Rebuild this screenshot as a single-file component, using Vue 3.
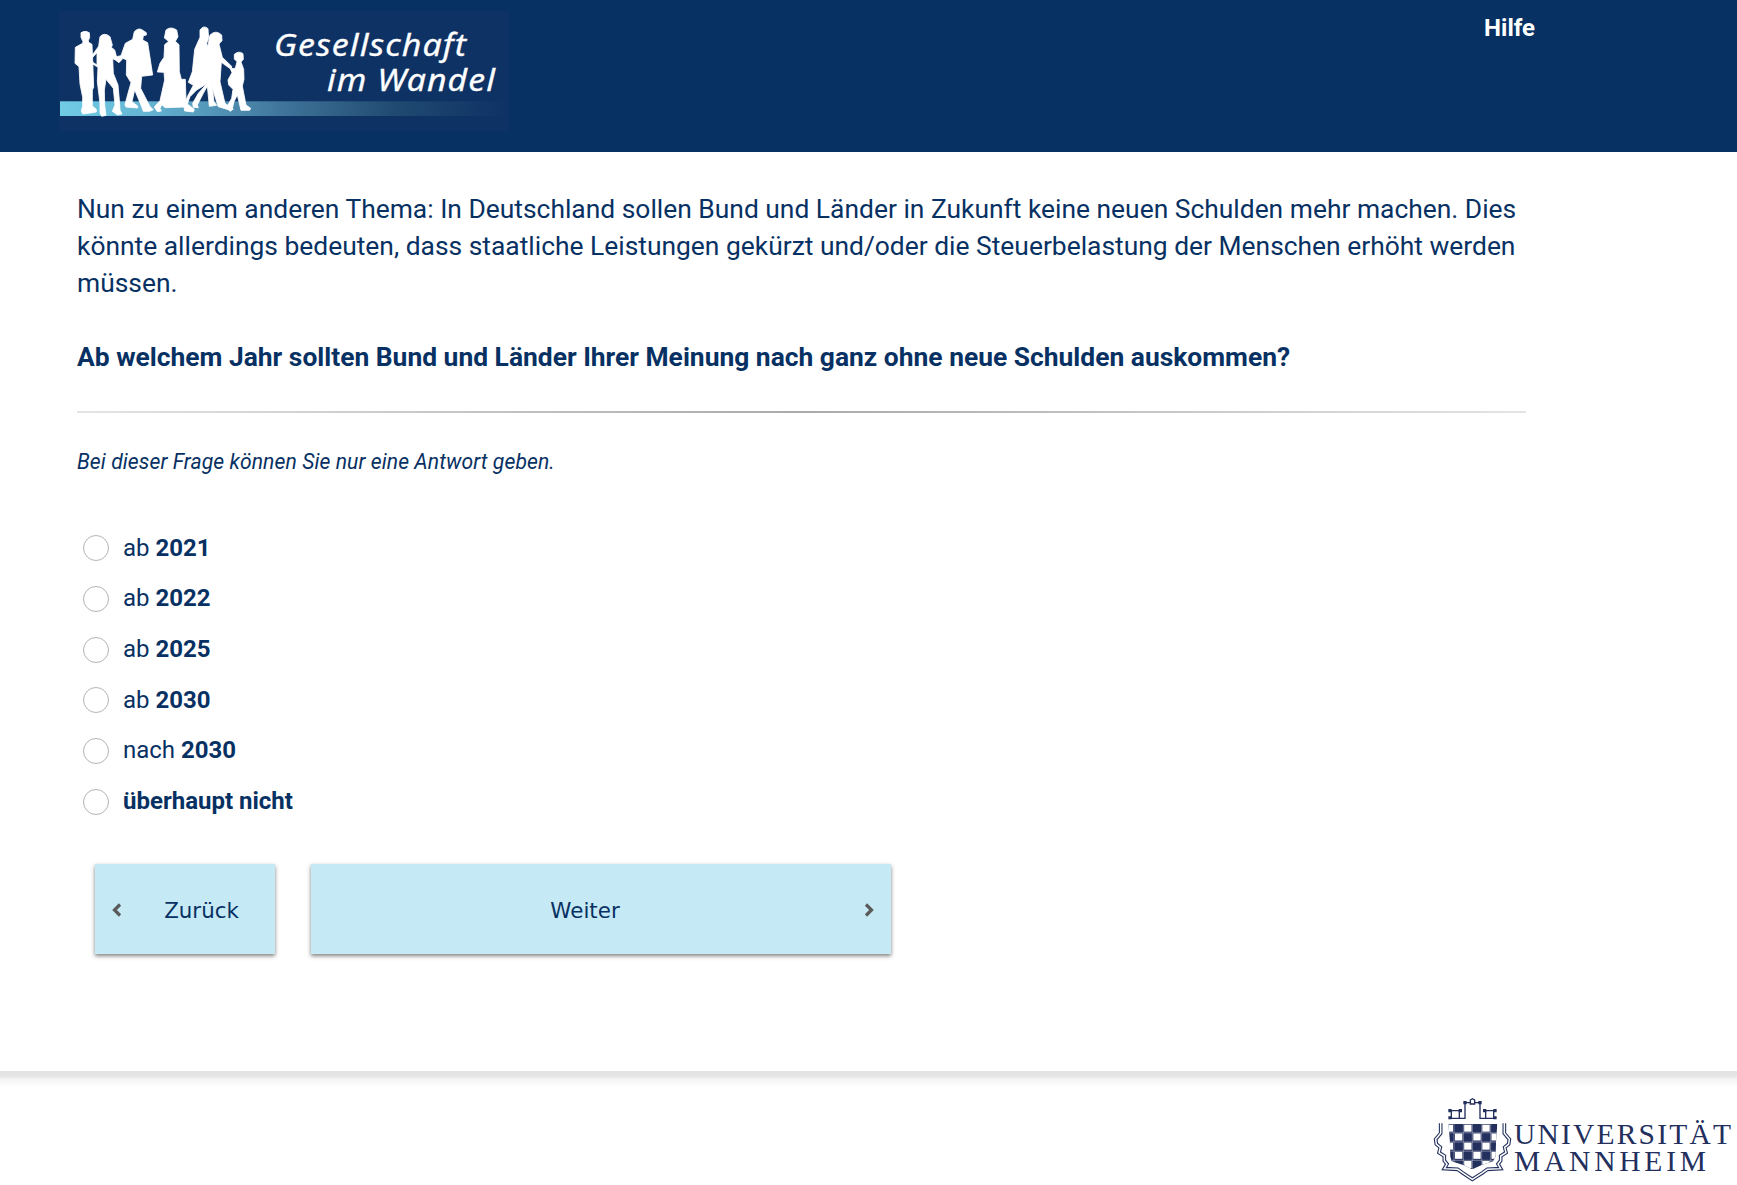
<script setup>
const options = [
  { pre: 'ab ', strong: '2021' },
  { pre: 'ab ', strong: '2022' },
  { pre: 'ab ', strong: '2025' },
  { pre: 'ab ', strong: '2030' },
  { pre: 'nach ', strong: '2030' },
  { pre: '', strong: 'überhaupt nicht' },
]
// White fields of the checkered university shield
const columns = [62, 90, 117.500, 145, 172, 199.500]
const rows = [104, 130.500, 158, 185.500, 213]
const checks = rows.flatMap((y, r) =>
  columns.filter((_, c) => c % 2 === r % 2).map((x) => ({ x, y })),
)
</script>

<template>
  <div class="page">
    <header class="top">
      <svg class="logo" width="450" height="120" viewBox="59 11 450 120">
        <defs>
          <linearGradient id="band" x1="0" x2="1" y1="0" y2="0">
            <stop offset="0" stop-color="#70cce4" />
            <stop offset=".2" stop-color="#65b4d2" />
            <stop offset=".5" stop-color="#40749a" />
            <stop offset=".75" stop-color="#204a71" />
            <stop offset="1" stop-color="#0f3265" />
          </linearGradient>
        </defs>
        <rect x="59" y="11" width="450" height="120" fill="#0f3265" />
        <rect x="60" y="101.300" width="446" height="14.700" fill="url(#band)" />
        <g class="people" transform="translate(50 10) scale(.33333)">
          <path d="M93 68Q105 60 118 68L119 82 115 92 116 97 126 103 128 150 131 232 127 240 127 288 139 298 139 306 122 309 98 312 94 303 98 288 98 262 90 222 87 170 75 160 76 112 98 100 99 95 93 82Z" />
          <path d="M150 80Q163 66 180 80L187 105 184 112 194 120 200 142 196 150 188 146 190 190 204 225 208 270 210 300 216 312 203 315 187 304 195 285 190 235 168 208 163 240 164 285 168 316 155 319 150 308 150 280 142 215 144 172 128 162 126 155 141 165 141 128 128 142 125 138 143 113 146 108Z" />
          <path d="M253 65Q265 52 277 60L289 68 289 75 280 77 278 90 293 98 298 130 308 195 275 199 272 235 300 290 310 299 298 304 280 304 273 285 254 240 246 275 263 288 263 294 228 291 225 284 234 250 243 218 229 195 230 150 219 145 207 158 196 150 200 140 213 137 226 100 248 88Z" />
          <path d="M348 60Q362 48 380 60L384 80 376 94 387 104 388 185 394 208 406 208 408 270 405 291 345 293 336 284 330 295 334 303 322 305 313 291 330 272 344 210 342 187 322 186 330 160 342 142 344 104 356 94 343 84Z" />
          <path d="M450 60Q461 44 474 56L476 85 470 100 485 150 470 222 440 240 420 260 412 282 433 298 430 306 404 303 402 290 412 260 430 226 415 217 427 185 434 118 450 82Z" />
          <path d="M480 75Q498 58 515 75L516 92 507 102 517 142 546 170 542 177 514 157 510 215 525 280 550 298 538 300 505 290 490 245 485 215 492 275 500 286 478 289 472 228 460 250 442 285 445 293 430 292 428 280 445 250 470 222 466 150 475 100Z" />
          <path d="M553 133Q566 121 579 131L580 148 573 156 581 178 582 208 577 228 588 285 602 295 599 301 573 301 562 255 552 275 546 300 540 304 530 292 545 265 549 238 536 225 534 210 546 188 541 176 556 175 561 155 553 147Z" />
        </g>
        <g class="brand">
          <text x="274" y="56" textLength="193" lengthAdjust="spacingAndGlyphs">Gesellschaft</text>
          <text x="327" y="90.500" textLength="169" lengthAdjust="spacingAndGlyphs">im Wandel</text>
        </g>
      </svg>
      <a class="help">Hilfe</a>
    </header>

    <main class="content">
      <p class="question">Nun zu einem anderen Thema: In Deutschland sollen Bund und Länder in Zukunft keine neuen Schulden mehr machen. Dies<br />könnte allerdings bedeuten, dass staatliche Leistungen gekürzt und/oder die Steuerbelastung der Menschen erhöht werden<br />müssen.</p>
      <p class="question strong">Ab welchem Jahr sollten Bund und Länder Ihrer Meinung nach ganz ohne neue Schulden auskommen?</p>
      <div class="rule"></div>
      <p class="hint">Bei dieser Frage können Sie nur eine Antwort geben.</p>
      <ul class="options">
        <li v-for="(o, i) in options" :key="i">
          <span class="radio"></span>
          <span class="label">{{ o.pre }}<b>{{ o.strong }}</b></span>
        </li>
      </ul>
      <div class="buttons">
        <button class="btn back">
          <svg width="10" height="14" viewBox="0 0 10 14"><path d="M8 1.500 2.500 7 8 12.500" /></svg>
          <span>Zurück</span>
        </button>
        <button class="btn next">
          <span>Weiter</span>
          <svg width="10" height="14" viewBox="0 0 10 14"><path d="M2 1.500 7.500 7 2 12.500" /></svg>
        </button>
      </div>
    </main>

    <footer class="foot">
      <svg width="307" height="90" viewBox="1430 1094 307 90">
        <defs>
          <clipPath id="shield"><path d="M70 102H217Q212 150 212 200L204 214Q175 222 142 238Q110 222 80 214L76 200Q76 150 70 102Z" /></clipPath>
        </defs>
        <g transform="translate(1425 1090) scale(.33333)">
          <g fill="none" stroke="#232f5d" stroke-width="4">
            <path d="M72 85H120V38H165V85H213M76 62H108M79 62V85M103 62V85M177 62H210M182 62V85M206 62V85" />
            <path fill="#fff" d="M136 42V30L142 26 149 30V42Z" />
          </g>
          <path fill="#232f5d" d="M70 57h10v10h-10zM101 57h10v10h-10zM115 33h10v10h-10zM160 33h10v10h-10zM174 57h10v10h-10zM205 57h10v10h-10zM70 79h10v9h-10zM205 79h10v9h-10z" />
          <path class="mantle" d="M47 100V130L32 148 34 162 46 172 42 188 58 198 58 212 66 222 58 236 98 238 112 248 142 268 173 248 187 238 227 236 219 222 227 212 227 198 243 188 239 172 251 162 253 148 238 130V100" />
          <path class="mantle-gap" d="M47 98V130L32 148 34 162 46 172 42 188 58 198 58 212 66 222 58 236 98 238 112 248 142 268 173 248 187 238 227 236 219 222 227 212 227 198 243 188 239 172 251 162 253 148 238 130V98" />
          <g clip-path="url(#shield)">
            <rect x="60" y="100" width="165" height="145" fill="#232f5d" />
            <path class="grid" d="M87 100V245M115 100V245M142 100V245M170 100V245M197 100V245M60 128.500H225M60 156H225M60 183.500H225M60 211H225" />
            <rect v-for="(c, i) in checks" :key="i" :x="c.x" :y="c.y" width="22" height="21" fill="#fff" />
          </g>
        </g>
        <g class="uni">
          <text x="1514" y="1144" textLength="217">UNIVERSITÄT</text>
          <text x="1514" y="1171" textLength="192">MANNHEIM</text>
        </g>
      </svg>
    </footer>
  </div>
</template>

<style>
body { margin: 0; background: #fff; }
</style>

<style scoped>
.page { height: 1185px; display: flex; flex-direction: column; overflow: hidden; color: #083163; font-family: Roboto, sans-serif; }
.top { box-sizing: border-box; height: 152px; flex: none; background: #083163; display: flex; justify-content: space-between; align-items: flex-start; padding: 11px 202px 0 59px; }
.logo { display: block; }
.people { fill: #fff; stroke: #fff; stroke-width: 2.500; stroke-linejoin: round; }
.brand { fill: #fff; stroke: #fff; stroke-width: .3; font: italic 31px "Noto Sans", sans-serif; letter-spacing: 1px; }
.help { color: #fff; font-size: 24px; font-weight: 700; line-height: 34px; }
.content { flex: none; box-sizing: border-box; height: 919px; padding: 39px 0 0 77px; }
.question { margin: 0 0 37px; font-size: 26.400px; line-height: 37px; white-space: nowrap; }
.strong { font-weight: 700; margin-bottom: 35px; }
.rule { width: 1449px; height: 2px; background: linear-gradient(90deg, #e4e4e4, #aaa 50%, #e4e4e4); }
.hint { margin: 34px 0 45.800px; font-size: 21.120px; line-height: 30px; font-style: italic; letter-spacing: .09px; }
.options { list-style: none; margin: 0; padding: 0; }
.options li { height: 50.700px; display: flex; align-items: center; }
.radio { box-sizing: border-box; width: 26px; height: 26px; margin-left: 6px; border: 1px solid #b4b4b4; border-radius: 50%; }
.label { margin: 0 0 .8px 14px; font-size: 24px; white-space: pre; }
.buttons { display: flex; gap: 36px; margin: 37px 0 0 18px; }
.btn { box-sizing: border-box; height: 90px; border: 0; background: #c5e9f5; color: #083163; display: flex; align-items: center; padding: 2px 17px 0; font: 21.400px "DejaVu Sans", sans-serif; box-shadow: 0 2px 4px rgba(0, 0, 0, .5); }
.btn span { flex: 1; text-align: center; padding-top: 2px; }
.btn path { fill: none; stroke: #5a5a5a; stroke-width: 3.200; }
.back { width: 180px; }
.back svg { margin-right: 23px; }
.next { width: 580px; }
.next svg { margin-left: 22px; }
.foot { flex: 1; background: linear-gradient(#e3e3e3, #e5e5e5 5px, #f3f3f3 8px, #fff 16px); display: flex; justify-content: flex-end; align-items: flex-start; padding-top: 23px; }
.mantle { fill: none; stroke: #232f5d; stroke-width: 11; }
.mantle-gap { fill: none; stroke: #fff; stroke-width: 4.500; }
.grid { stroke: #c8cbd8; stroke-width: 1.500; }
.uni { fill: #232f5d; font: 29.500px "Liberation Serif", serif; }
</style>
